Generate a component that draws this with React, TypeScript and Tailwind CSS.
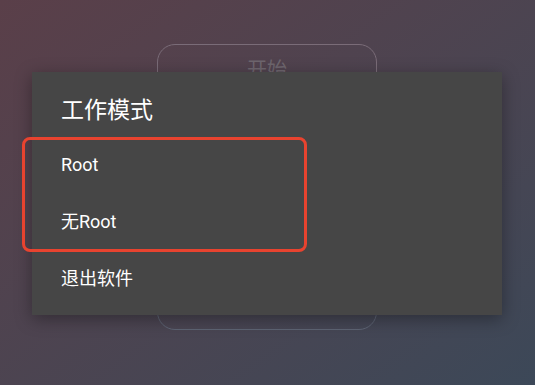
export default function App() {
  const font = { fontFamily: 'Roboto, "Noto Sans CJK SC", sans-serif' };
  return (
    <div
      className="relative h-[385px] w-[535px] overflow-hidden bg-gradient-to-br from-[#5a3f49] to-[#3c4858]"
      style={font}
    >
      {/* buttons underneath the dialog */}
      <div className="flex flex-col gap-[46px] pl-[157px] pt-[44px]">
        <div className="flex h-[120px] w-[220px] items-start justify-center rounded-[18px] border border-[#7a6c78] pt-[10px] text-[20px] text-[#6e666e]">
          开始
        </div>
        <div className="flex h-[120px] w-[220px] items-end justify-center rounded-[18px] border border-[#5e6474] pb-[8px] text-[20px] text-[#5f626c]">
          退出
        </div>
      </div>

      {/* dialog */}
      <div className="absolute left-[32px] top-[72px] w-[470px] bg-[#464646] pb-[8px] shadow-[0_4px_16px_rgba(0,0,0,0.35)]">
        <div className="h-[64px] pl-[29px] pt-[26px] text-[23px] leading-[26px] text-white">工作模式</div>
        <div className="flex h-[57px] items-center pl-[29px] text-[18px] text-white">Root</div>
        <div className="flex h-[57px] items-center pl-[29px] text-[18px] text-white">无Root</div>
        <div className="flex h-[57px] items-center pl-[29px] text-[18px] text-white">退出软件</div>

        {/* annotation highlight */}
        <div className="absolute left-[-10px] top-[65px] h-[115px] w-[285px] rounded-[8px] border-[3px] border-[#e8432f]" />
      </div>
    </div>
  );
}
